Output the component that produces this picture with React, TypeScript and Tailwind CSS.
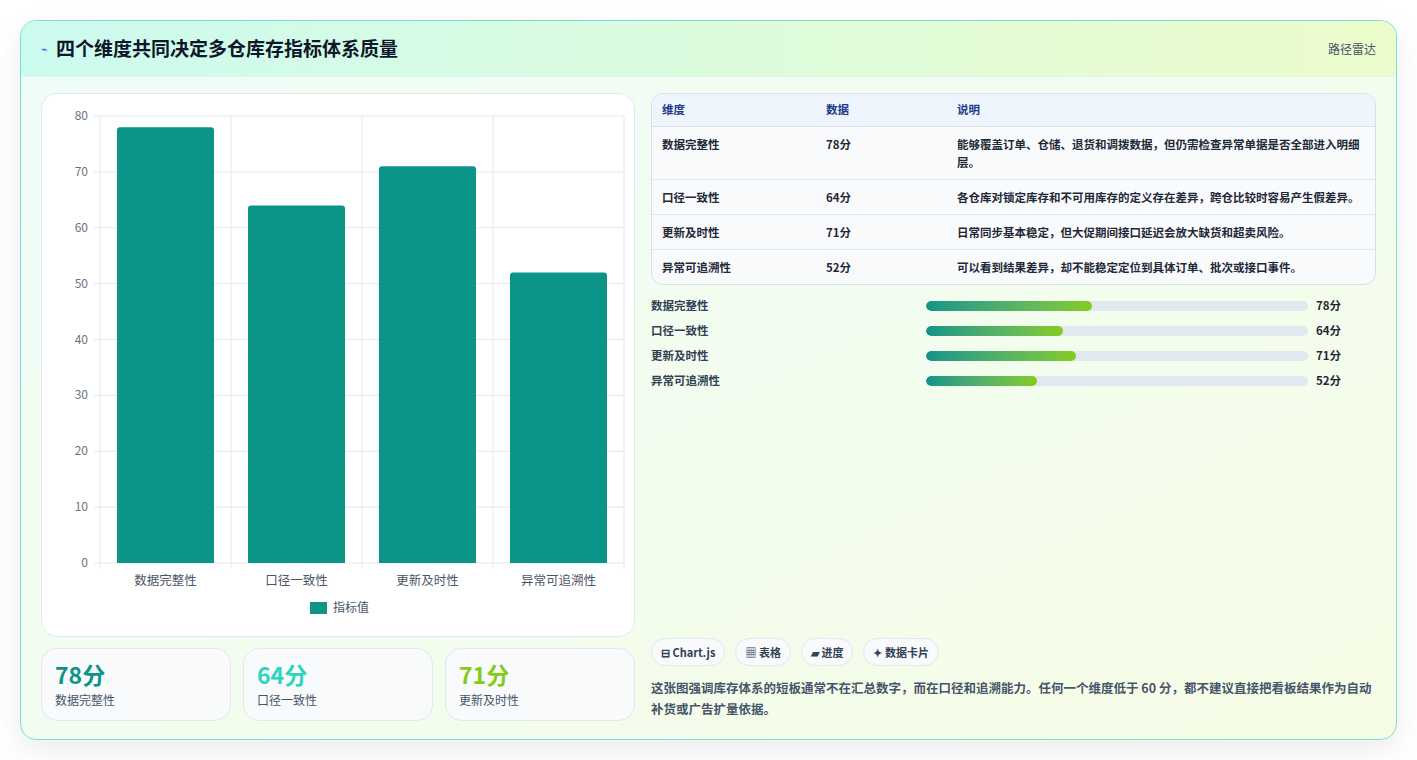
import React from 'react';

const rows = [
  { name: '数据完整性', v: 78, desc: '能够覆盖订单、仓储、退货和调拨数据，但仍需检查异常单据是否全部进入明细层。' },
  { name: '口径一致性', v: 64, desc: '各仓库对锁定库存和不可用库存的定义存在差异，跨仓比较时容易产生假差异。' },
  { name: '更新及时性', v: 71, desc: '日常同步基本稳定，但大促期间接口延迟会放大缺货和超卖风险。' },
  { name: '异常可追溯性', v: 52, desc: '可以看到结果差异，却不能稳定定位到具体订单、批次或接口事件。' },
];

const font = { fontFamily: '"Noto Sans CJK SC", "Noto Sans", sans-serif' };

const Chart: React.FC = () => {
  const ticks = [80, 70, 60, 50, 40, 30, 20, 10, 0];
  const top = 22, bottom = 469, left = 58, right = 582;
  const y = (v: number) => bottom - ((bottom - top) * v) / 80;
  const cw = (right - left) / 4;
  return (
    <svg width="594" height="543" className="block">
      {ticks.map(t => (
        <g key={t}>
          <line x1={left - 6} x2={right} y1={y(t)} y2={y(t)} stroke="#e5e7eb" />
          <text x={left - 12} y={y(t) + 4} textAnchor="end" fontSize="12" fill="#6b7280">{t}</text>
        </g>
      ))}
      {[0, 1, 2, 3, 4].map(i => (
        <line key={i} x1={left + cw * i} x2={left + cw * i} y1={top} y2={bottom + 6} stroke="#e5e7eb" />
      ))}
      {rows.map((r, i) => (
        <g key={r.name}>
          <path d={`M${left + cw * i + 2} ${bottom} V${y(r.v) + 3} q0 -3 3 -3 h91 q3 0 3 3 V${bottom} Z`} fill="#0d9488" transform={`translate(${(cw - 97) / 2 - 2},0)`} />
          <text x={left + cw * i + cw / 2} y={bottom + 22} textAnchor="middle" fontSize="12.5" fill="#4b5563">{r.name}</text>
        </g>
      ))}
      <rect x="268" y="508" width="17" height="12" fill="#0d9488" />
      <text x="291" y="518" fontSize="12" fill="#4b5563">指标值</text>
    </svg>
  );
};

const App: React.FC = () => {
  const fills = [166, 137, 150, 111];
  const colors = ['text-[#0d9488]', 'text-[#2dd4bf]', 'text-[#84cc16]'];
  return (
    <div className="w-[1417px] h-[760px] bg-white pt-[20px] px-[20px]" style={font}>
      <div className="h-[720px] rounded-2xl border border-[#7fdcd0] overflow-hidden bg-gradient-to-br from-[#effdf8] to-[#f6fde6] shadow-[0_10px_30px_rgba(0,0,0,0.08)]">
        <div className="h-[56px] flex items-center justify-between px-5 bg-gradient-to-r from-[#ccfbef] to-[#ecfccb] border-b border-[#e0f5ee]">
          <div className="flex items-center gap-2">
            <span className="text-[#2563eb] text-[11px]">⌁</span>
            <h1 className="text-[19px] font-bold text-[#0f172a]">四个维度共同决定多仓库存指标体系质量</h1>
          </div>
          <span className="text-[12px] text-[#475569]">路径雷达</span>
        </div>
        <div className="flex gap-4 px-5 pt-4">
          <div className="w-[594px] flex flex-col gap-[11px]">
            <div className="h-[544px] rounded-2xl border border-[#e2e8f0] bg-white overflow-hidden">
              <Chart />
            </div>
            <div className="flex gap-3">
              {rows.slice(0, 3).map((r, i) => (
                <div key={r.name} className="w-[190px] h-[73px] rounded-2xl border border-[#e2e8f0] bg-[#f8fafc] px-[13px] pt-[10px]">
                  <div className={`text-[23px] font-bold leading-[30px] ${colors[i]}`}>{r.v}分</div>
                  <div className="text-[12px] text-[#475569] mt-[2px]">{r.name}</div>
                </div>
              ))}
            </div>
          </div>
          <div className="flex-1 flex flex-col">
            <div className="rounded-xl border border-[#d6e0ea] overflow-hidden bg-[#f8fafc] text-[11.5px]">
              <div className="flex h-[33px] items-center bg-[#eef5fd] border-b border-[#d6e0ea] font-bold text-[#1e3a8a]">
                <div className="w-[174px] pl-[10px]">维度</div>
                <div className="w-[131px]">数据</div>
                <div>说明</div>
              </div>
              {rows.map((r, i) => (
                <div key={r.name} className={`flex py-[8px] font-semibold text-[#1f2937] ${i < 3 ? 'border-b border-[#e2e8f0]' : ''}`}>
                  <div className="w-[174px] pl-[10px] leading-[18px]">{r.name}</div>
                  <div className="w-[131px] leading-[18px]">{r.v}分</div>
                  <div className="flex-1 pr-[10px] leading-[18px]">{r.desc}</div>
                </div>
              ))}
            </div>
            <div className="flex flex-col gap-[7px] mt-[12px]">
              {rows.map((r, i) => (
                <div key={r.name} className="flex items-center h-[18px] text-[11.5px] font-semibold">
                  <div className="w-[275px] text-[#334155]">{r.name}</div>
                  <div className="w-[382px] h-[10px] rounded-full bg-[#e2e8f0] overflow-hidden">
                    <div className="h-full rounded-full bg-gradient-to-r from-[#0d9488] to-[#84cc16]" style={{ width: fills[i] }} />
                  </div>
                  <div className="ml-[8px] text-[#1f2937]">{r.v}分</div>
                </div>
              ))}
            </div>
            <div className="mt-auto pb-[2px]">
              <div className="flex gap-[10px] text-[11px] font-bold text-[#334155]">
                {['⊟ Chart.js', '▦ 表格', '▰ 进度', '✦ 数据卡片'].map(t => (
                  <span key={t} className="h-[28px] px-[9px] flex items-center rounded-full border border-[#e2e8f0] bg-[#f8fafc]">{t}</span>
                ))}
              </div>
              <p className="mt-[11px] text-[12.5px] leading-[21px] font-semibold text-[#475569]">
                这张图强调库存体系的短板通常不在汇总数字，而在口径和追溯能力。任何一个维度低于 60 分，都不建议直接把看板结果作为自动补货或广告扩量依据。
              </p>
            </div>
          </div>
        </div>
      </div>
    </div>
  );
};

export default App;
